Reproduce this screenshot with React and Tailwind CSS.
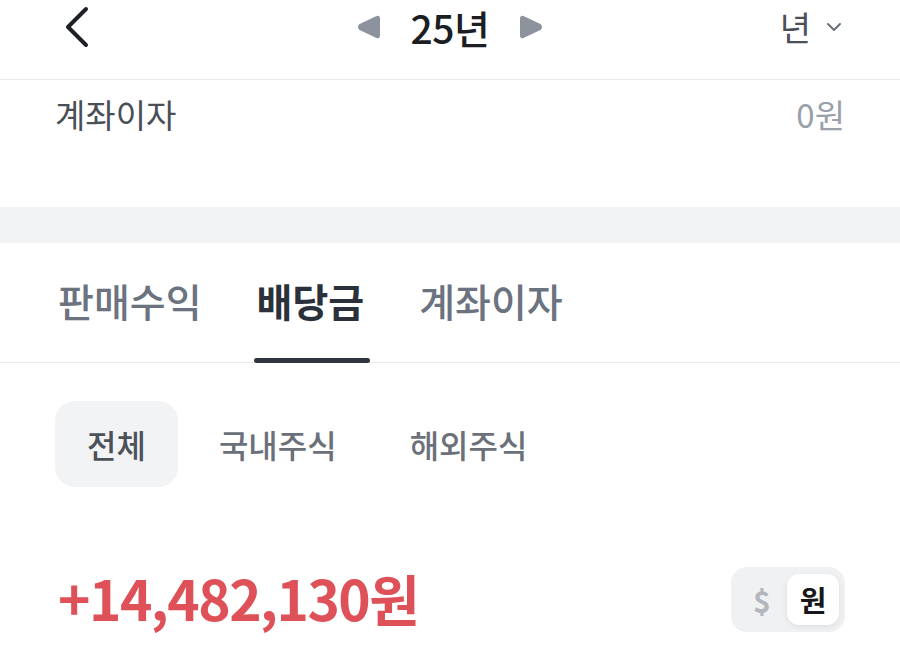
import React from "react";

const font = { fontFamily: '"Noto Sans CJK KR", "Noto Sans", sans-serif' };

export default function App() {
  return (
    <div className="w-[900px] h-[668px] bg-white overflow-hidden" style={font}>
      {/* Header */}
      <div className="h-[80px] border-b border-[#e8e9eb] flex items-center justify-between px-[55px] relative">
        <svg width="34" height="44" viewBox="0 0 34 44" className="ml-[4px] -mt-[26px]">
          <path d="M27 4 L9 22 L27 40" fill="none" stroke="#1e2126" strokeWidth="4" strokeLinecap="round" strokeLinejoin="round" />
        </svg>
        <div className="absolute left-0 right-0 top-0 h-[54px] flex items-center justify-center gap-[30px] pointer-events-none">
          <svg width="26" height="28" viewBox="0 0 26 28">
            <path d="M22 4 Q24 3 24 6 L24 22 Q24 25 22 24 L5 16 Q3 14 5 12 Z" fill="#8c939c" stroke="#8c939c" strokeWidth="2" strokeLinejoin="round" />
          </svg>
          <span className="text-[39px] font-medium text-[#1b1e23] leading-none tracking-[-0.5px]">25년</span>
          <svg width="26" height="28" viewBox="0 0 26 28">
            <path d="M4 4 Q2 3 2 6 L2 22 Q2 25 4 24 L21 16 Q23 14 21 12 Z" fill="#8c939c" stroke="#8c939c" strokeWidth="2" strokeLinejoin="round" />
          </svg>
        </div>
        <div className="flex items-center gap-[14px] -mt-[26px] mr-[2px]">
          <span className="text-[34px] text-[#4b5058] leading-none">년</span>
          <svg width="18" height="12" viewBox="0 0 18 12">
            <path d="M3 3 L9 9 L15 3" fill="none" stroke="#6b7079" strokeWidth="2" strokeLinecap="round" strokeLinejoin="round" />
          </svg>
        </div>
      </div>

      {/* Account interest row */}
      <div className="h-[127px] px-[55px] flex items-start justify-between pt-[12px]">
        <span className="text-[33px] text-[#4a4f57] leading-[44px]">계좌이자</span>
        <span className="text-[33px] text-[#9aa0a8] leading-[44px]">0원</span>
      </div>

      {/* Gray band */}
      <div className="h-[36px] bg-[#f2f3f5]" />

      {/* Tabs */}
      <div className="h-[120px] border-b border-[#e8e9eb] px-[58px] flex items-stretch gap-[55px]">
        <div className="flex items-center pb-[5px]">
          <span className="text-[39px] font-medium text-[#6b7280]">판매수익</span>
        </div>
        <div className="relative flex items-center pb-[5px]">
          <span className="text-[39px] font-bold text-[#2b313b]">배당금</span>
          <div className="absolute left-[-3px] right-[-6px] bottom-[-1px] h-[5px] rounded-full bg-[#2f3541]" />
        </div>
        <div className="flex items-center pb-[5px]">
          <span className="text-[39px] font-medium text-[#6b7280]">계좌이자</span>
        </div>
      </div>

      {/* Chips */}
      <div className="px-[55px] pt-[38px] flex items-center gap-[9px]">
        <div className="h-[86px] px-[32px] rounded-[20px] bg-[#f2f3f5] flex items-center justify-center">
          <span className="text-[32px] font-medium text-[#4d525a]">전체</span>
        </div>
        <div className="h-[86px] px-[32px] flex items-center justify-center">
          <span className="text-[32px] font-medium text-[#6b7079]">국내주식</span>
        </div>
        <div className="h-[86px] px-[32px] flex items-center justify-center">
          <span className="text-[32px] font-medium text-[#6b7079]">해외주식</span>
        </div>
      </div>

      {/* Amount */}
      <div className="pl-[58px] pr-[55px] pt-[80px] flex items-center justify-between">
        <span className="text-[55px] font-bold text-[#df5159] tracking-[-1.5px] leading-none -mt-[4px]">+14,482,130원</span>
        <div className="h-[65px] w-[114px] rounded-[16px] bg-[#f0f1f3] flex items-center pl-[14px] pr-[6px] justify-between">
          <span className="text-[30px] font-bold text-[#b3b7bd] leading-none pl-[8px]">$</span>
          <div className="h-[51px] w-[52px] rounded-[12px] bg-white shadow-[0_2px_6px_rgba(0,0,0,0.08)] flex items-center justify-center">
            <span className="text-[29px] font-bold text-[#16181c] leading-none">원</span>
          </div>
        </div>
      </div>
    </div>
  );
}
